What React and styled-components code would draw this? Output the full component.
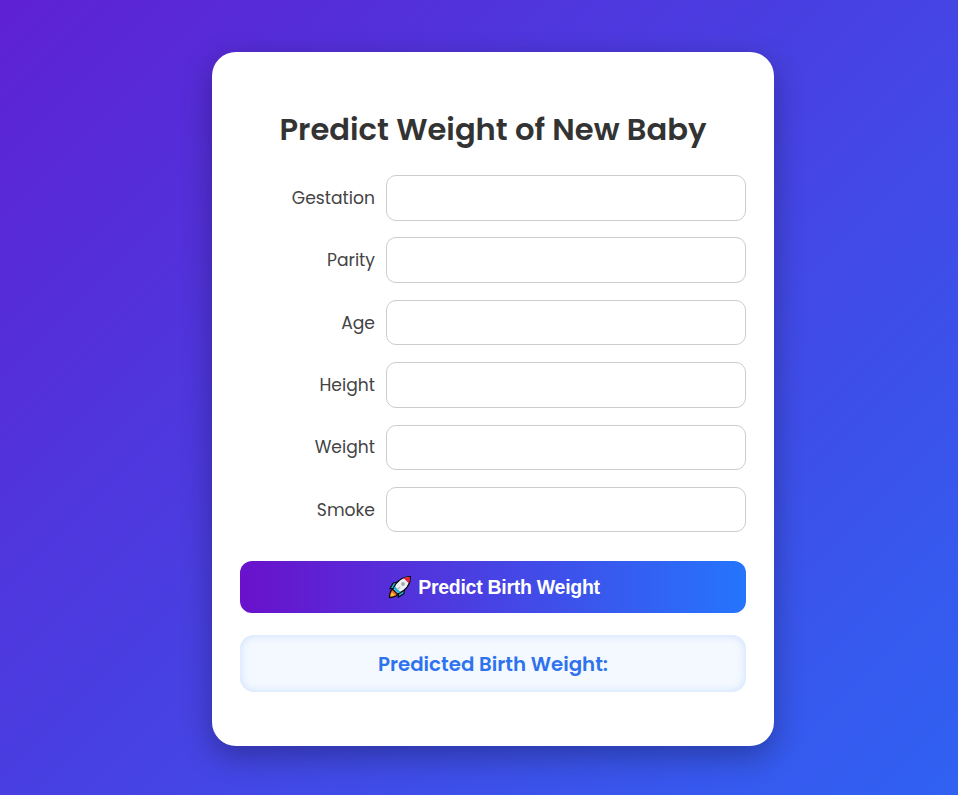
import React from "react";
import styled, { createGlobalStyle } from "styled-components";

const GlobalStyle = createGlobalStyle`
  *, *::before, *::after { box-sizing: border-box; }
  body {
    margin: 0;
    overflow: hidden;
    font-family: Poppins, Inter, sans-serif;
  }
`;

const Page = styled.main`
  display: flex;
  justify-content: center;
  align-items: flex-start;
  height: 795px;
  padding: 52px 0 0 28px;
  background: linear-gradient(135deg, #5e21d3 0%, #3062f2 100%);
`;

const Card = styled.form`
  width: 562px;
  height: 694px;
  padding: 54px 28px;
  background: #fff;
  border-radius: 24px;
  box-shadow: 0 10px 30px rgba(0, 0, 0, 0.3);
`;

const Title = styled.h1`
  margin: 0 0 22px;
  font-size: 30.6px;
  line-height: 47px;
  font-weight: 600;
  text-align: center;
  white-space: nowrap;
  color: #333;
`;

const Fields = styled.div`
  display: grid;
  row-gap: 16.9px;
`;

const Field = styled.div`
  display: grid;
  grid-template-columns: 135px 360px;
  column-gap: 11px;
  align-items: center;
`;

const Label = styled.label`
  text-align: right;
  font-size: 17.15px;
  line-height: 26px;
  color: #444;
`;

const Input = styled.input`
  width: 100%;
  height: 45.5px;
  padding: 10px 14px;
  font: inherit;
  background: #fff;
  border: 1px solid #ccc;
  border-radius: 10px;
  outline: none;
`;

const Submit = styled.button`
  display: flex;
  justify-content: center;
  align-items: center;
  gap: 6px;
  width: 100%;
  height: 52px;
  margin-top: 29px;
  padding: 0 0 0 2px;
  border: 0;
  border-radius: 12px;
  background: linear-gradient(90deg, #6a11cb, #2575fc);
  color: #fff;
  font: 700 19.5px/24px "Liberation Sans", Arial, sans-serif;
  letter-spacing: -0.27px;
`;

const RocketIcon = styled.svg`
  width: 24px;
  height: 24px;
  flex: none;
`;

const Result = styled.output`
  display: flex;
  justify-content: center;
  align-items: center;
  height: 57px;
  margin-top: 22px;
  padding-top: 1px;
  border-radius: 14px;
  background: #f4f9ff;
  box-shadow: inset 0 0 10px rgba(37, 117, 252, 0.2);
  color: #2f72ee;
  font-size: 19.8px;
  font-weight: 600;
`;

const fields = ["Gestation", "Parity", "Age", "Height", "Weight", "Smoke"];

function Rocket() {
  return (
    <RocketIcon viewBox="0 0 24 24" aria-hidden="true">
      <g stroke="#080a0d" strokeWidth="1.2" strokeLinejoin="round">
        <path d="M10 7.2 5.2 8 1.9 13.8l5.3-.5Z" fill="#1bb5df" />
        <path d="m16.7 14-.9 4.8-5.7 3.5.7-5.4Z" fill="#1bb5df" />
        <path d="M4.8 14.2C2.2 15.4 1.5 18.7 1.4 22.6c3.8-.2 7.2-1.1 8.4-3.8Z" fill="#f26b22" />
        <path d="M4.8 14.4C7.7 7.5 13.8 1.6 22.5 1.5c0 8.5-6 14.6-12.9 17.6Z" fill="#eef0f5" />
      </g>
      <path d="m5.6 14.1 1.4-2.5 5.4 5.4-2.5 1.3Z" fill="#22b2d8" />
      <path d="M15.7 3.2c2-.9 4.2-1.4 6.4-1.3 0 2.3-.5 4.4-1.4 6.3Z" fill="#e32138" />
      <path d="M4 17.2c-.8 1-1.2 2.4-1.4 4.1 1.8-.1 3.4-.6 4.3-1.6Z" fill="#ffc52e" />
      <circle cx="15" cy="8.9" r="2" fill="#a6aab2" />
      <path d="m9.4 14.7 2.8-2.9" stroke="#b4b7be" strokeWidth="1.2" />
    </RocketIcon>
  );
}

export default function App() {
  return (
    <>
      <GlobalStyle />
      <Page>
        <Card onSubmit={(e) => e.preventDefault()}>
          <Title>Predict Weight of New Baby</Title>
          <Fields>
            {fields.map((name) => (
              <Field key={name}>
                <Label htmlFor={name}>{name}</Label>
                <Input id={name} name={name} />
              </Field>
            ))}
          </Fields>
          <Submit type="submit">
            <Rocket />
            <span>Predict Birth Weight</span>
          </Submit>
          <Result>Predicted Birth Weight:</Result>
        </Card>
      </Page>
    </>
  );
}
